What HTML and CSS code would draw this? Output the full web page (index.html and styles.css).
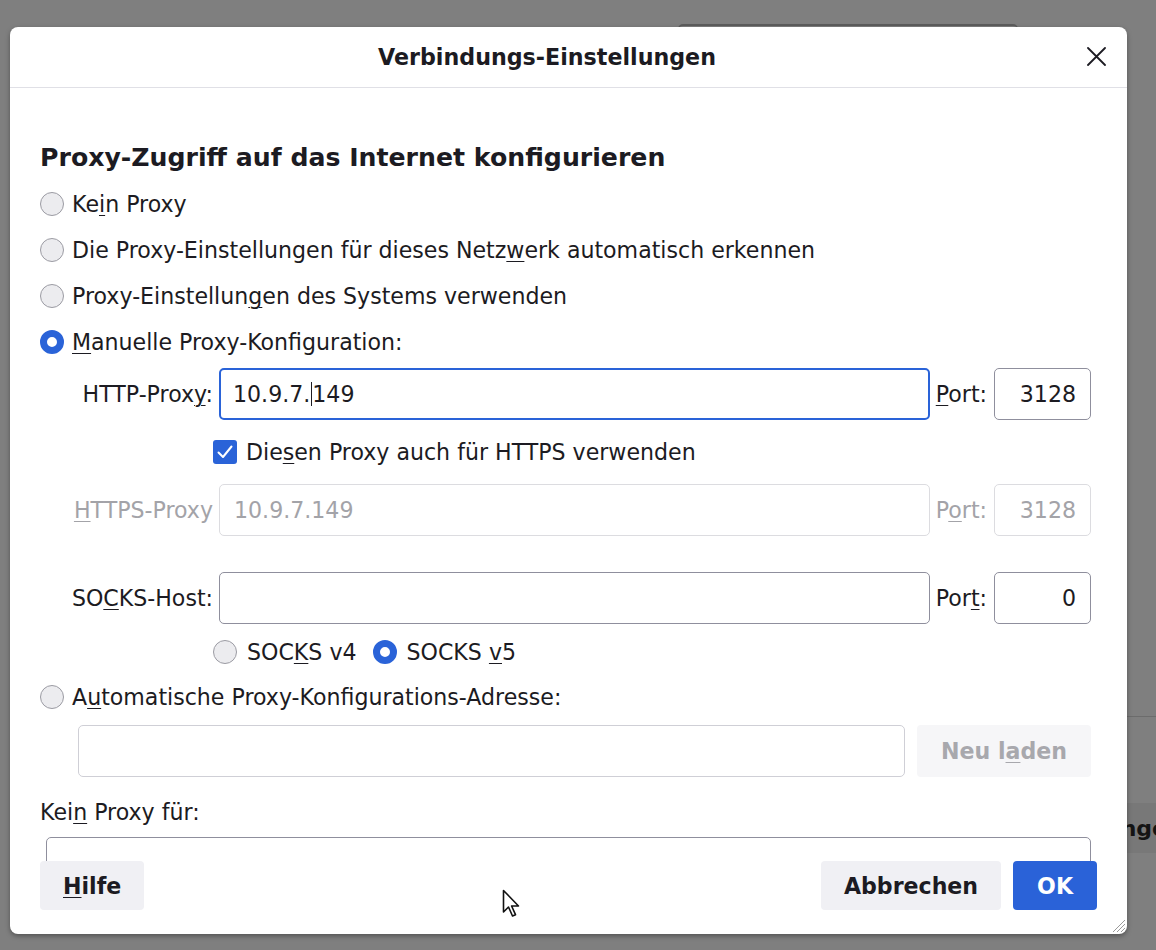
FILE: index.html
```html
<!DOCTYPE html>
<html lang="de">
<head>
<meta charset="utf-8">
<title>Verbindungs-Einstellungen</title>
<link rel="stylesheet" href="styles.css">
</head>
<body>
<div class="backdrop">
  <div class="bg-box"></div>
  <div class="bg-line"></div>
  <div class="bg-band"><span class="bg-band-text">unge</span></div>
</div>

<div class="dialog">
  <div class="dlg-header">
    <div class="dlg-title">Verbindungs-Einstellungen</div>
    <div class="dlg-close">
      <svg width="19" height="19" viewBox="0 0 19 19"><path d="M1 1 L18 18 M18 1 L1 18" stroke="#1c1b22" stroke-width="1.8" fill="none" stroke-linecap="round"/></svg>
    </div>
  </div>

  <div class="dlg-body">
    <h2 class="section-title">Proxy-Zugriff auf das Internet konfigurieren</h2>
    <div class="radio-row"><span class="radio"></span><span>Ke<u>i</u>n Proxy</span></div>
    <div class="radio-row"><span class="radio"></span><span>Die Proxy-Einstellungen für dieses Netz<u>w</u>erk automatisch erkennen</span></div>
    <div class="radio-row"><span class="radio"></span><span>Proxy-Einstellun<u>g</u>en des Systems verwenden</span></div>
    <div class="radio-row"><span class="radio checked"></span><span><u>M</u>anuelle Proxy-Konfiguration:</span></div>

    <div class="field-row row-http">
      <span class="field-label">HTTP-Prox<u>y</u>:</span>
      <div class="input focused"><span>10.9.7.</span><span class="caret"></span><span>149</span></div>
      <span class="port-label"><u>P</u>ort:</span>
      <div class="input port">3128</div>
    </div>

    <div class="check-row">
      <span class="checkbox"><svg width="16" height="14" viewBox="0 0 16 14"><path d="M1.5 7.5 L6 12 L14.5 1.5" stroke="#fff" stroke-width="2" fill="none" stroke-linecap="round" stroke-linejoin="round"/></svg></span>
      <span>Die<u>s</u>en Proxy auch für HTTPS verwenden</span>
    </div>

    <div class="field-row row-https disabled">
      <span class="field-label"><u>H</u>TTPS-Proxy</span>
      <div class="input">10.9.7.149</div>
      <span class="port-label">P<u>o</u>rt:</span>
      <div class="input port">3128</div>
    </div>

    <div class="field-row row-socks">
      <span class="field-label">SO<u>C</u>KS-Host:</span>
      <div class="input"></div>
      <span class="port-label">Por<u>t</u>:</span>
      <div class="input port">0</div>
    </div>

    <div class="socks-row">
      <span class="radio-inline"><span class="radio"></span><span>SOC<u>K</u>S v4</span></span>
      <span class="radio-inline"><span class="radio checked"></span><span>SOCKS <u>v</u>5</span></span>
    </div>

    <div class="radio-row row-auto"><span class="radio"></span><span>A<u>u</u>tomatische Proxy-Konfigurations-Adresse:</span></div>

    <div class="auto-row">
      <div class="input"></div>
      <div class="btn-disabled">Neu l<u>a</u>den</div>
    </div>

    <div class="noproxy-label">Kei<u>n</u> Proxy für:</div>
    <div class="textarea"></div>
  </div>

  <div class="dlg-footer">
    <div class="btn"><u>H</u>ilfe</div>
    <div class="footer-spacer"></div>
    <div class="btn">Abbrechen</div>
    <div class="btn primary">OK</div>
  </div>

  <svg class="grip" width="16" height="16" viewBox="0 0 16 16"><path d="M15 3 L3 15 M15 7 L7 15 M15 11 L11 15" stroke="#9a9a9a" stroke-width="1" fill="none"/></svg>
</div>

<svg class="pointer" width="20" height="30" viewBox="0 0 20 30"><path d="M1.5 1.5 L1.5 23 L6.5 18 L10.5 27 L13.5 25.7 L9.6 17 L16.5 17 Z" fill="#fff" stroke="#111" stroke-width="1.6" stroke-linejoin="round"/></svg>
</body>
</html>
```

FILE: styles.css
```css
* { box-sizing: border-box; }

html, body {
  margin: 0;
  padding: 0;
}

body {
  width: 1156px;
  height: 950px;
  background: #7f7f7f;
  font-family: "DejaVu Sans", "Noto Sans", sans-serif;
  font-size: 22.1px;
  color: #1c1b22;
  position: relative;
  overflow: hidden;
}

u { text-decoration-thickness: 1px; text-underline-offset: 3px; }

/* background page behind the dim layer */
.backdrop { position: absolute; inset: 0; }
.bg-box {
  position: absolute;
  left: 678px; top: 24px;
  width: 340px; height: 30px;
  border-top: 2px solid #5c5c5c;
  border-radius: 5px 5px 0 0;
}
.bg-line {
  position: absolute;
  left: 1100px; top: 716px;
  width: 56px; height: 1px;
  background: #6c6c6c;
}
.bg-band {
  position: absolute;
  left: 1040px; top: 803px;
  width: 116px; height: 50px;
  background: #787878;
  display: flex;
  align-items: center;
  overflow: hidden;
}
.bg-band-text {
  margin-left: 65px;
  font-weight: bold;
  font-size: 22px;
  color: #141414;
  white-space: nowrap;
}

/* dialog window */
.dialog {
  position: absolute;
  left: 10px; top: 27px;
  width: 1117px; height: 907px;
  background: #fff;
  border-radius: 8px;
  box-shadow: 0 2px 5px rgba(0,0,0,0.35);
  display: flex;
  flex-direction: column;
  overflow: hidden;
}

.dlg-header {
  flex: none;
  height: 61px;
  border-bottom: 1px solid #e0e0e6;
  display: flex;
  align-items: center;
}
.dlg-title {
  flex: 1;
  text-align: center;
  font-weight: bold;
  font-size: 22.2px;
}
.dlg-close {
  flex: none;
  width: 43px;
  display: flex;
  align-items: center;
  padding-left: 3px;
  padding-bottom: 1px;
}

.dlg-body {
  flex: none;
  height: 773px;
  overflow: hidden;
  padding: 0 36px 0 30px;
}

.section-title {
  margin: 55px 0 8px;
  height: 30px;
  line-height: 30px;
  font-size: 25.2px;
  font-weight: bold;
}

.radio-row {
  height: 46px;
  display: flex;
  align-items: center;
  gap: 8px;
}

.radio {
  flex: none;
  width: 24px; height: 24px;
  border-radius: 50%;
  border: 1px solid #9b9ba3;
  background: #ececef;
}
.radio.checked {
  border: 7px solid #2a63d8;
  background: #fff;
}

.field-row {
  height: 52px;
  display: flex;
  align-items: center;
}
.row-http { margin-top: 3px; }
.row-https { margin-top: 11px; }
.row-socks { margin-top: 36px; }

.field-label {
  flex: none;
  width: 173px;
  text-align: right;
  margin-right: 6px;
}
.port-label {
  flex: none;
  margin: 0 7px 0 6px;
}

.input {
  flex: 1;
  height: 52px;
  border: 1px solid #8f8f9d;
  border-radius: 5px;
  background: #fff;
  display: flex;
  align-items: center;
  padding: 0 14px;
}
.input.focused {
  border: 2px solid #2a63d8;
  padding-left: 12px;
}
.input.port {
  flex: none;
  width: 97px;
  justify-content: flex-end;
}
.caret {
  display: inline-block;
  width: 1px;
  height: 24px;
  background: #1c1b22;
  margin-left: 1px;
}

.disabled { color: #a3a3a8; }
.disabled .input { border-color: #dcdce0; }

.check-row {
  margin-top: 11px;
  height: 42px;
  display: flex;
  align-items: center;
  gap: 9px;
  padding-left: 173px;
}
.checkbox {
  flex: none;
  width: 24px; height: 24px;
  border-radius: 3px;
  background: #2a63d8;
  display: flex;
  align-items: center;
  justify-content: center;
}

.socks-row {
  margin-top: 8px;
  height: 40px;
  display: flex;
  align-items: center;
  gap: 16px;
  padding-left: 173px;
}
.radio-inline {
  display: flex;
  align-items: center;
  gap: 10px;
}

.row-auto { margin-top: 2px; }

.auto-row {
  margin-top: 5px;
  height: 52px;
  display: flex;
  gap: 12px;
  padding-left: 38px;
}
.auto-row .input { border-color: #cfcfd6; }
.btn-disabled {
  flex: none;
  width: 174px;
  border-radius: 4px;
  background: #f6f6f8;
  color: #a8a8ad;
  font-weight: bold;
  display: flex;
  align-items: center;
  justify-content: center;
}

.noproxy-label {
  margin-top: 22px;
  height: 26px;
  line-height: 26px;
}

.textarea {
  margin: 12px 0 0 6px;
  height: 120px;
  border: 1px solid #8f8f9d;
  border-radius: 5px;
}

.dlg-footer {
  flex: none;
  display: flex;
  gap: 12px;
  padding: 0 30px 24px;
}
.footer-spacer { flex: 1; }
.btn {
  height: 49px;
  padding: 0 23px;
  border-radius: 4px;
  background: #f0f0f4;
  font-weight: bold;
  display: flex;
  align-items: center;
}
.btn.primary {
  background: #2a62d8;
  color: #fff;
  padding: 0 24px;
}

.grip {
  position: absolute;
  right: 1px; bottom: 1px;
}

.pointer {
  position: absolute;
  left: 502px; top: 889px;
}
```
